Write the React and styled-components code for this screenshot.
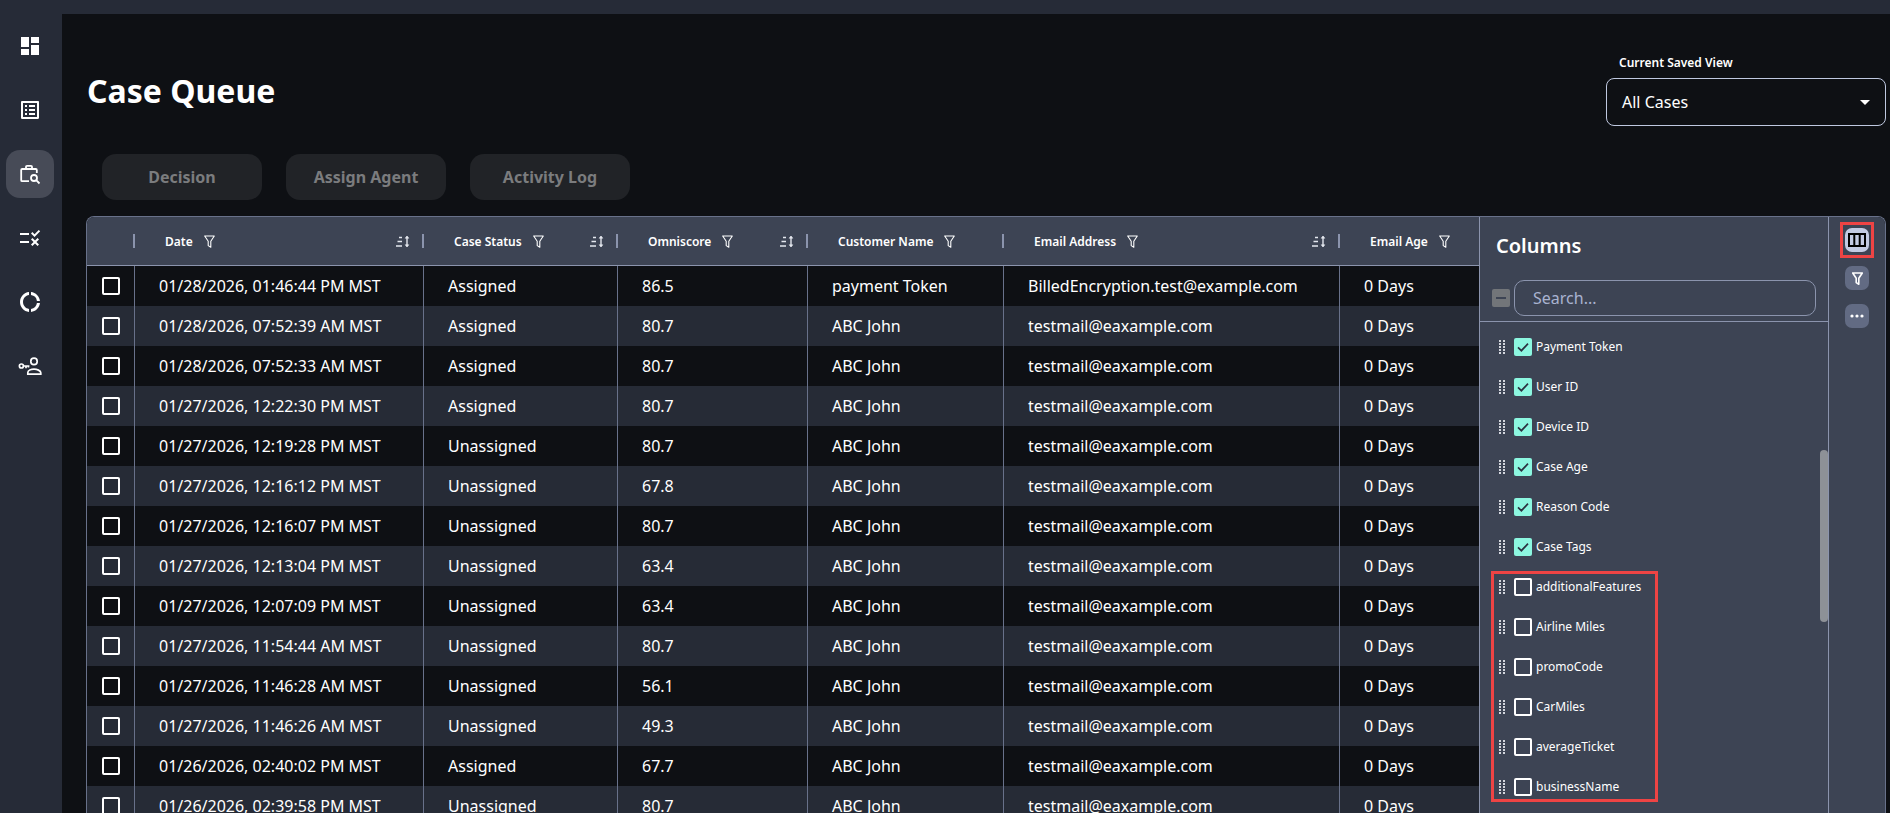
import React from "react";
import styled, { createGlobalStyle } from "styled-components";
import {
  MdDashboard,
  MdOutlineListAlt,
  MdOutlineRule,
  MdOutlineDonutLarge,
} from "react-icons/md";

const GlobalStyle = createGlobalStyle`
  html, body {
    margin: 0;
    height: 100%;
    background: #0e1014;
    overflow: hidden;
  }
  *, *::before, *::after { box-sizing: border-box; }
  body {
    font-family: "Noto Sans", "Open Sans", sans-serif;
    color: #fff;
  }
`;

const COLUMN_GRID = "47px 289px 194px 190px 196px 336px 1fr";

const rows = [
  ["01/28/2026, 01:46:44 PM MST", "Assigned", "86.5", "payment Token", "BilledEncryption.test@example.com"],
  ["01/28/2026, 07:52:39 AM MST", "Assigned", "80.7"],
  ["01/28/2026, 07:52:33 AM MST", "Assigned", "80.7"],
  ["01/27/2026, 12:22:30 PM MST", "Assigned", "80.7"],
  ["01/27/2026, 12:19:28 PM MST", "Unassigned", "80.7"],
  ["01/27/2026, 12:16:12 PM MST", "Unassigned", "67.8"],
  ["01/27/2026, 12:16:07 PM MST", "Unassigned", "80.7"],
  ["01/27/2026, 12:13:04 PM MST", "Unassigned", "63.4"],
  ["01/27/2026, 12:07:09 PM MST", "Unassigned", "63.4"],
  ["01/27/2026, 11:54:44 AM MST", "Unassigned", "80.7"],
  ["01/27/2026, 11:46:28 AM MST", "Unassigned", "56.1"],
  ["01/27/2026, 11:46:26 AM MST", "Unassigned", "49.3"],
  ["01/26/2026, 02:40:02 PM MST", "Assigned", "67.7"],
  ["01/26/2026, 02:39:58 PM MST", "Unassigned", "80.7"],
];

const headers = [
  { label: "Date", sort: true },
  { label: "Case Status", sort: true },
  { label: "Omniscore", sort: true },
  { label: "Customer Name" },
  { label: "Email Address", sort: true },
  { label: "Email Age" },
];

const checkedColumns = ["Payment Token", "User ID", "Device ID", "Case Age", "Reason Code", "Case Tags"];
const newColumns = ["additionalFeatures", "Airline Miles", "promoCode", "CarMiles", "averageTicket", "businessName"];

function FilterIcon({ weight = 1.1 }) {
  return (
    <svg width="11" height="13" viewBox="0 0 11 13" fill="none" stroke="currentColor" strokeWidth={weight} strokeLinejoin="round">
      <path d="M.7 1h9.6L6.8 6.2v6L4.2 10.6V6.2z" />
    </svg>
  );
}

function SortIcon() {
  return (
    <svg width="14" height="13" viewBox="0 0 14 13" fill="none" stroke="#e4e7ee" strokeWidth="1.4">
      <path d="M3 2.5h3M1.5 6.5h4.5M0 11h6" />
      <path d="M11 1.5v10" />
      <path d="M9.2 3.2L11 1l1.8 2.2zM9.2 9.8L11 12l1.8-2.2z" fill="#e4e7ee" strokeWidth="0.6" />
    </svg>
  );
}

function CaseSearchIcon() {
  return (
    <svg width="24" height="24" viewBox="0 0 24 24" fill="none" stroke="currentColor" strokeWidth="1.8">
      <path d="M11 19.2H4.2a1 1 0 0 1-1-1V8a1 1 0 0 1 1-1h13.6a1 1 0 0 1 1 1v3" />
      <path d="M8 7V4.8a1 1 0 0 1 1-1h4a1 1 0 0 1 1 1V7" />
      <circle cx="16" cy="16" r="3" />
      <path d="M18.2 18.2l3.3 3.3" />
    </svg>
  );
}

function KeyPersonIcon() {
  return (
    <svg width="24" height="24" viewBox="0 0 24 24" fill="none" stroke="currentColor" strokeWidth="1.7">
      <circle cx="3.4" cy="12" r="2" />
      <path d="M5.4 12h6M8 12v2.2M10.4 12v1.6" />
      <circle cx="16" cy="7.4" r="3.2" />
      <path d="M9.8 20.2v-1.4c0-2.4 3.4-3.6 6.2-3.6s6.8 1.2 6.8 3.6v1.4z" />
    </svg>
  );
}

function DragHandle() {
  const dots = [];
  for (let y = 0; y < 5; y++) {
    dots.push(<rect key={`a${y}`} x="0" y={y * 3} width="2" height="2" />);
    dots.push(<rect key={`b${y}`} x="4" y={y * 3} width="2" height="2" />);
  }
  return (
    <Handle width="6" height="14" viewBox="0 0 6 14" fill="#d3d6dd">
      {dots}
    </Handle>
  );
}

function ColumnItem({ name, checked }) {
  return (
    <Item>
      <DragHandle />
      <Box $checked={checked}>
        {checked && (
          <svg width="14" height="14" viewBox="0 0 14 14" fill="none" stroke="#2b3240" strokeWidth="1.7">
            <path d="M2 7.4l3.4 3.3L12 3.6" />
          </svg>
        )}
      </Box>
      <ItemLabel>{name}</ItemLabel>
    </Item>
  );
}

export default function App() {
  return (
    <>
      <GlobalStyle />
      <Page>
        <TopBar />
        <Body>
          <Sidebar>
            <NavItem><MdDashboard size={24} /></NavItem>
            <NavItem><MdOutlineListAlt size={24} /></NavItem>
            <NavItem $active><CaseSearchIcon /></NavItem>
            <NavItem><MdOutlineRule size={24} /></NavItem>
            <NavItem><MdOutlineDonutLarge size={24} /></NavItem>
            <NavItem><KeyPersonIcon /></NavItem>
          </Sidebar>
          <Main>
            <TitleRow>
              <Title>Case Queue</Title>
              <ViewPicker>
                <ViewLabel>Current Saved View</ViewLabel>
                <ViewSelect>
                  All Cases
                  <Caret />
                </ViewSelect>
              </ViewPicker>
            </TitleRow>
            <Actions>
              <ActionButton>Decision</ActionButton>
              <ActionButton>Assign Agent</ActionButton>
              <ActionButton>Activity Log</ActionButton>
            </Actions>
            <Grid>
              <TableArea>
                <HeaderRow>
                  <div />
                  {headers.map((h) => (
                    <HeaderCell key={h.label}>
                      <Separator />
                      <HeaderLabel>{h.label}</HeaderLabel>
                      <FilterWrap><FilterIcon /></FilterWrap>
                      {h.sort && <SortWrap><SortIcon /></SortWrap>}
                    </HeaderCell>
                  ))}
                </HeaderRow>
                {rows.map((r, i) => (
                  <Row key={r[0]} $odd={i % 2 === 1}>
                    <CheckCell><Box /></CheckCell>
                    <Cell>{r[0]}</Cell>
                    <Cell>{r[1]}</Cell>
                    <Cell>{r[2]}</Cell>
                    <Cell>{r[3] || "ABC John"}</Cell>
                    <Cell>{r[4] || "testmail@eaxample.com"}</Cell>
                    <Cell>0 Days</Cell>
                  </Row>
                ))}
              </TableArea>
              <Panel>
                <PanelTitle>Columns</PanelTitle>
                <SearchRow>
                  <MinusBox />
                  <SearchInput placeholder="Search..." />
                </SearchRow>
                <ColumnList>
                  <Thumb />
                  {checkedColumns.map((c) => (
                    <ColumnItem key={c} name={c} checked />
                  ))}
                  <Highlighted>
                    {newColumns.map((c) => (
                      <ColumnItem key={c} name={c} />
                    ))}
                  </Highlighted>
                </ColumnList>
              </Panel>
              <Rail>
                <RailButton $active>
                  <svg width="18" height="14" viewBox="0 0 18 14" fill="none" stroke="#000" strokeWidth="2">
                    <rect x="1" y="1" width="16" height="12" />
                    <path d="M6.3 1v12M11.7 1v12" />
                  </svg>
                </RailButton>
                <RailButton><FilterIcon weight={1.6} /></RailButton>
                <RailButton>
                  <svg width="14" height="4" viewBox="0 0 14 4" fill="currentColor">
                    <circle cx="2" cy="2" r="1.6" />
                    <circle cx="7" cy="2" r="1.6" />
                    <circle cx="12" cy="2" r="1.6" />
                  </svg>
                </RailButton>
              </Rail>
            </Grid>
          </Main>
        </Body>
      </Page>
    </>
  );
}

const Page = styled.div`
  height: 813px;
  display: flex;
  flex-direction: column;
  overflow: hidden;
  background: #262b37;
`;

const TopBar = styled.div`
  height: 14px;
  flex: none;
`;

const Body = styled.div`
  flex: 1;
  min-height: 0;
  display: flex;
`;

const Sidebar = styled.nav`
  width: 62px;
  flex: none;
  display: flex;
  flex-direction: column;
  align-items: center;
  padding: 8px 2px 0 0;
  gap: 16px;
`;

const NavItem = styled.div`
  width: 48px;
  height: 48px;
  border-radius: 14px;
  display: flex;
  align-items: center;
  justify-content: center;
  color: #fff;
  background: ${(p) => (p.$active ? "#474b57" : "transparent")};
`;

const Main = styled.main`
  flex: 1;
  min-width: 0;
  display: flex;
  flex-direction: column;
  background: #0e1014;
  padding: 39px 4px 0 24px;
`;

const TitleRow = styled.div`
  display: flex;
  justify-content: space-between;
  align-items: center;
  padding-left: 1px;
`;

const Title = styled.h1`
  margin: 2px 0 0;
  font-size: 32px;
  line-height: 40px;
  font-weight: 700;
`;

const ViewPicker = styled.div`
  width: 280px;
`;

const ViewLabel = styled.div`
  font-size: 12px;
  font-weight: 600;
  line-height: 20px;
  margin: 0 0 5px 13px;
`;

const ViewSelect = styled.div`
  position: relative;
  height: 48px;
  border: 1px solid #bfc8e0;
  border-radius: 8px;
  display: flex;
  align-items: center;
  padding-left: 15px;
  font-size: 16px;
`;

const Caret = styled.span`
  position: absolute;
  right: 15px;
  top: 21px;
  border-left: 5px solid transparent;
  border-right: 5px solid transparent;
  border-top: 5px solid #fff;
`;

const Actions = styled.div`
  display: flex;
  gap: 24px;
  margin: 28px 0 16px 16px;
`;

const ActionButton = styled.button`
  width: 160px;
  height: 46px;
  border: 0;
  border-radius: 14px;
  background: #212327;
  color: #7b7c7e;
  font-family: inherit;
  font-size: 16px;
  font-weight: 700;
`;

const Grid = styled.section`
  flex: 1;
  min-height: 0;
  display: flex;
  overflow: hidden;
  border: 1px solid #68718a;
  border-bottom: 0;
  border-radius: 8px 8px 0 0;
  background: #0e1014;
`;

const TableArea = styled.div`
  width: 1392px;
  flex: none;
`;

const HeaderRow = styled.div`
  display: grid;
  grid-template-columns: ${COLUMN_GRID};
  height: 49px;
  background: #3d4454;
  border-bottom: 1px solid #8b94ad;
`;

const HeaderCell = styled.div`
  display: flex;
  align-items: center;
  min-width: 0;
  font-size: 12px;
  font-weight: 600;
`;

const Separator = styled.span`
  width: 2px;
  height: 14px;
  margin: 0 30px 0 -1px;
  background: #8b94ad;
  flex: none;
`;

const HeaderLabel = styled.span`
  white-space: nowrap;
`;

const FilterWrap = styled.span`
  display: flex;
  margin-left: 11px;
`;

const SortWrap = styled.span`
  display: flex;
  margin-left: auto;
  margin-right: 13px;
`;

const Row = styled.div`
  display: grid;
  grid-template-columns: ${COLUMN_GRID};
  height: 40px;
  background: ${(p) => (p.$odd ? "#262b36" : "#0e1014")};
`;

const CheckCell = styled.div`
  display: flex;
  align-items: center;
  justify-content: center;
`;

const Cell = styled.div`
  display: flex;
  align-items: center;
  padding-left: 24px;
  border-left: 1px solid #68718a;
  font-size: 16px;
  white-space: nowrap;
`;

const Box = styled.span`
  width: 18px;
  height: 18px;
  flex: none;
  display: flex;
  align-items: center;
  justify-content: center;
  border-radius: 2px;
  border: ${(p) => (p.$checked ? "0" : "2px solid #fff")};
  background: ${(p) => (p.$checked ? "#8cf7e0" : "transparent")};
`;

const Panel = styled.aside`
  width: 349px;
  flex: none;
  display: flex;
  flex-direction: column;
  background: #3d4454;
  border-left: 1px solid #8b94ad;
`;

const PanelTitle = styled.h2`
  margin: 0;
  padding: 0 0 6px 16px;
  height: 63px;
  display: flex;
  align-items: center;
  font-size: 20px;
  font-weight: 600;
`;

const SearchRow = styled.div`
  display: flex;
  align-items: center;
  gap: 4px;
  height: 42px;
  padding: 0 12px 6px 12px;
  border-bottom: 1px solid #8b94ad;
`;

const MinusBox = styled.span`
  position: relative;
  width: 18px;
  height: 18px;
  flex: none;
  border-radius: 2px;
  background: #727579;
  &::after {
    content: "";
    position: absolute;
    left: 4px;
    right: 4px;
    top: 8px;
    height: 2px;
    background: #3d4454;
  }
`;

const SearchInput = styled.input`
  flex: 1;
  min-width: 0;
  height: 36px;
  border: 1px solid #8b94ad;
  border-radius: 10px;
  background: transparent;
  padding: 0 18px;
  color: #fff;
  font-family: inherit;
  font-size: 16px;
  outline: none;
  &::placeholder {
    color: #a9b3d0;
    opacity: 1;
  }
`;

const ColumnList = styled.div`
  position: relative;
  flex: 1;
  padding-top: 5px;
`;

const Thumb = styled.span`
  position: absolute;
  right: 0;
  top: 128px;
  width: 8px;
  height: 172px;
  border-radius: 4px;
  background: #8d9197;
`;

const Highlighted = styled.div`
  position: relative;
  &::after {
    content: "";
    position: absolute;
    left: 11px;
    top: 4px;
    width: 167px;
    height: 231px;
    border: 3px solid #ee4444;
    pointer-events: none;
  }
`;

const Item = styled.div`
  display: flex;
  align-items: center;
  height: 40px;
  padding-left: 19px;
`;

const Handle = styled.svg`
  margin-right: 9px;
  flex: none;
`;

const ItemLabel = styled.span`
  margin-left: 4px;
  padding-bottom: 2px;
  font-size: 12px;
  white-space: nowrap;
`;

const Rail = styled.div`
  flex: 1;
  display: flex;
  flex-direction: column;
  align-items: center;
  padding-top: 11px;
  gap: 14px;
  background: #3d4454;
  border-left: 1px solid #8b94ad;
`;

const RailButton = styled.div`
  position: relative;
  width: 24px;
  height: 24px;
  border-radius: 7px;
  display: flex;
  align-items: center;
  justify-content: center;
  color: #fff;
  background: ${(p) => (p.$active ? "#c3cbe3" : "#626b83")};
  ${(p) =>
    p.$active &&
    `&::after {
      content: "";
      position: absolute;
      inset: -6px -5px;
      border: 3px solid #ee4444;
    }`}
`;
